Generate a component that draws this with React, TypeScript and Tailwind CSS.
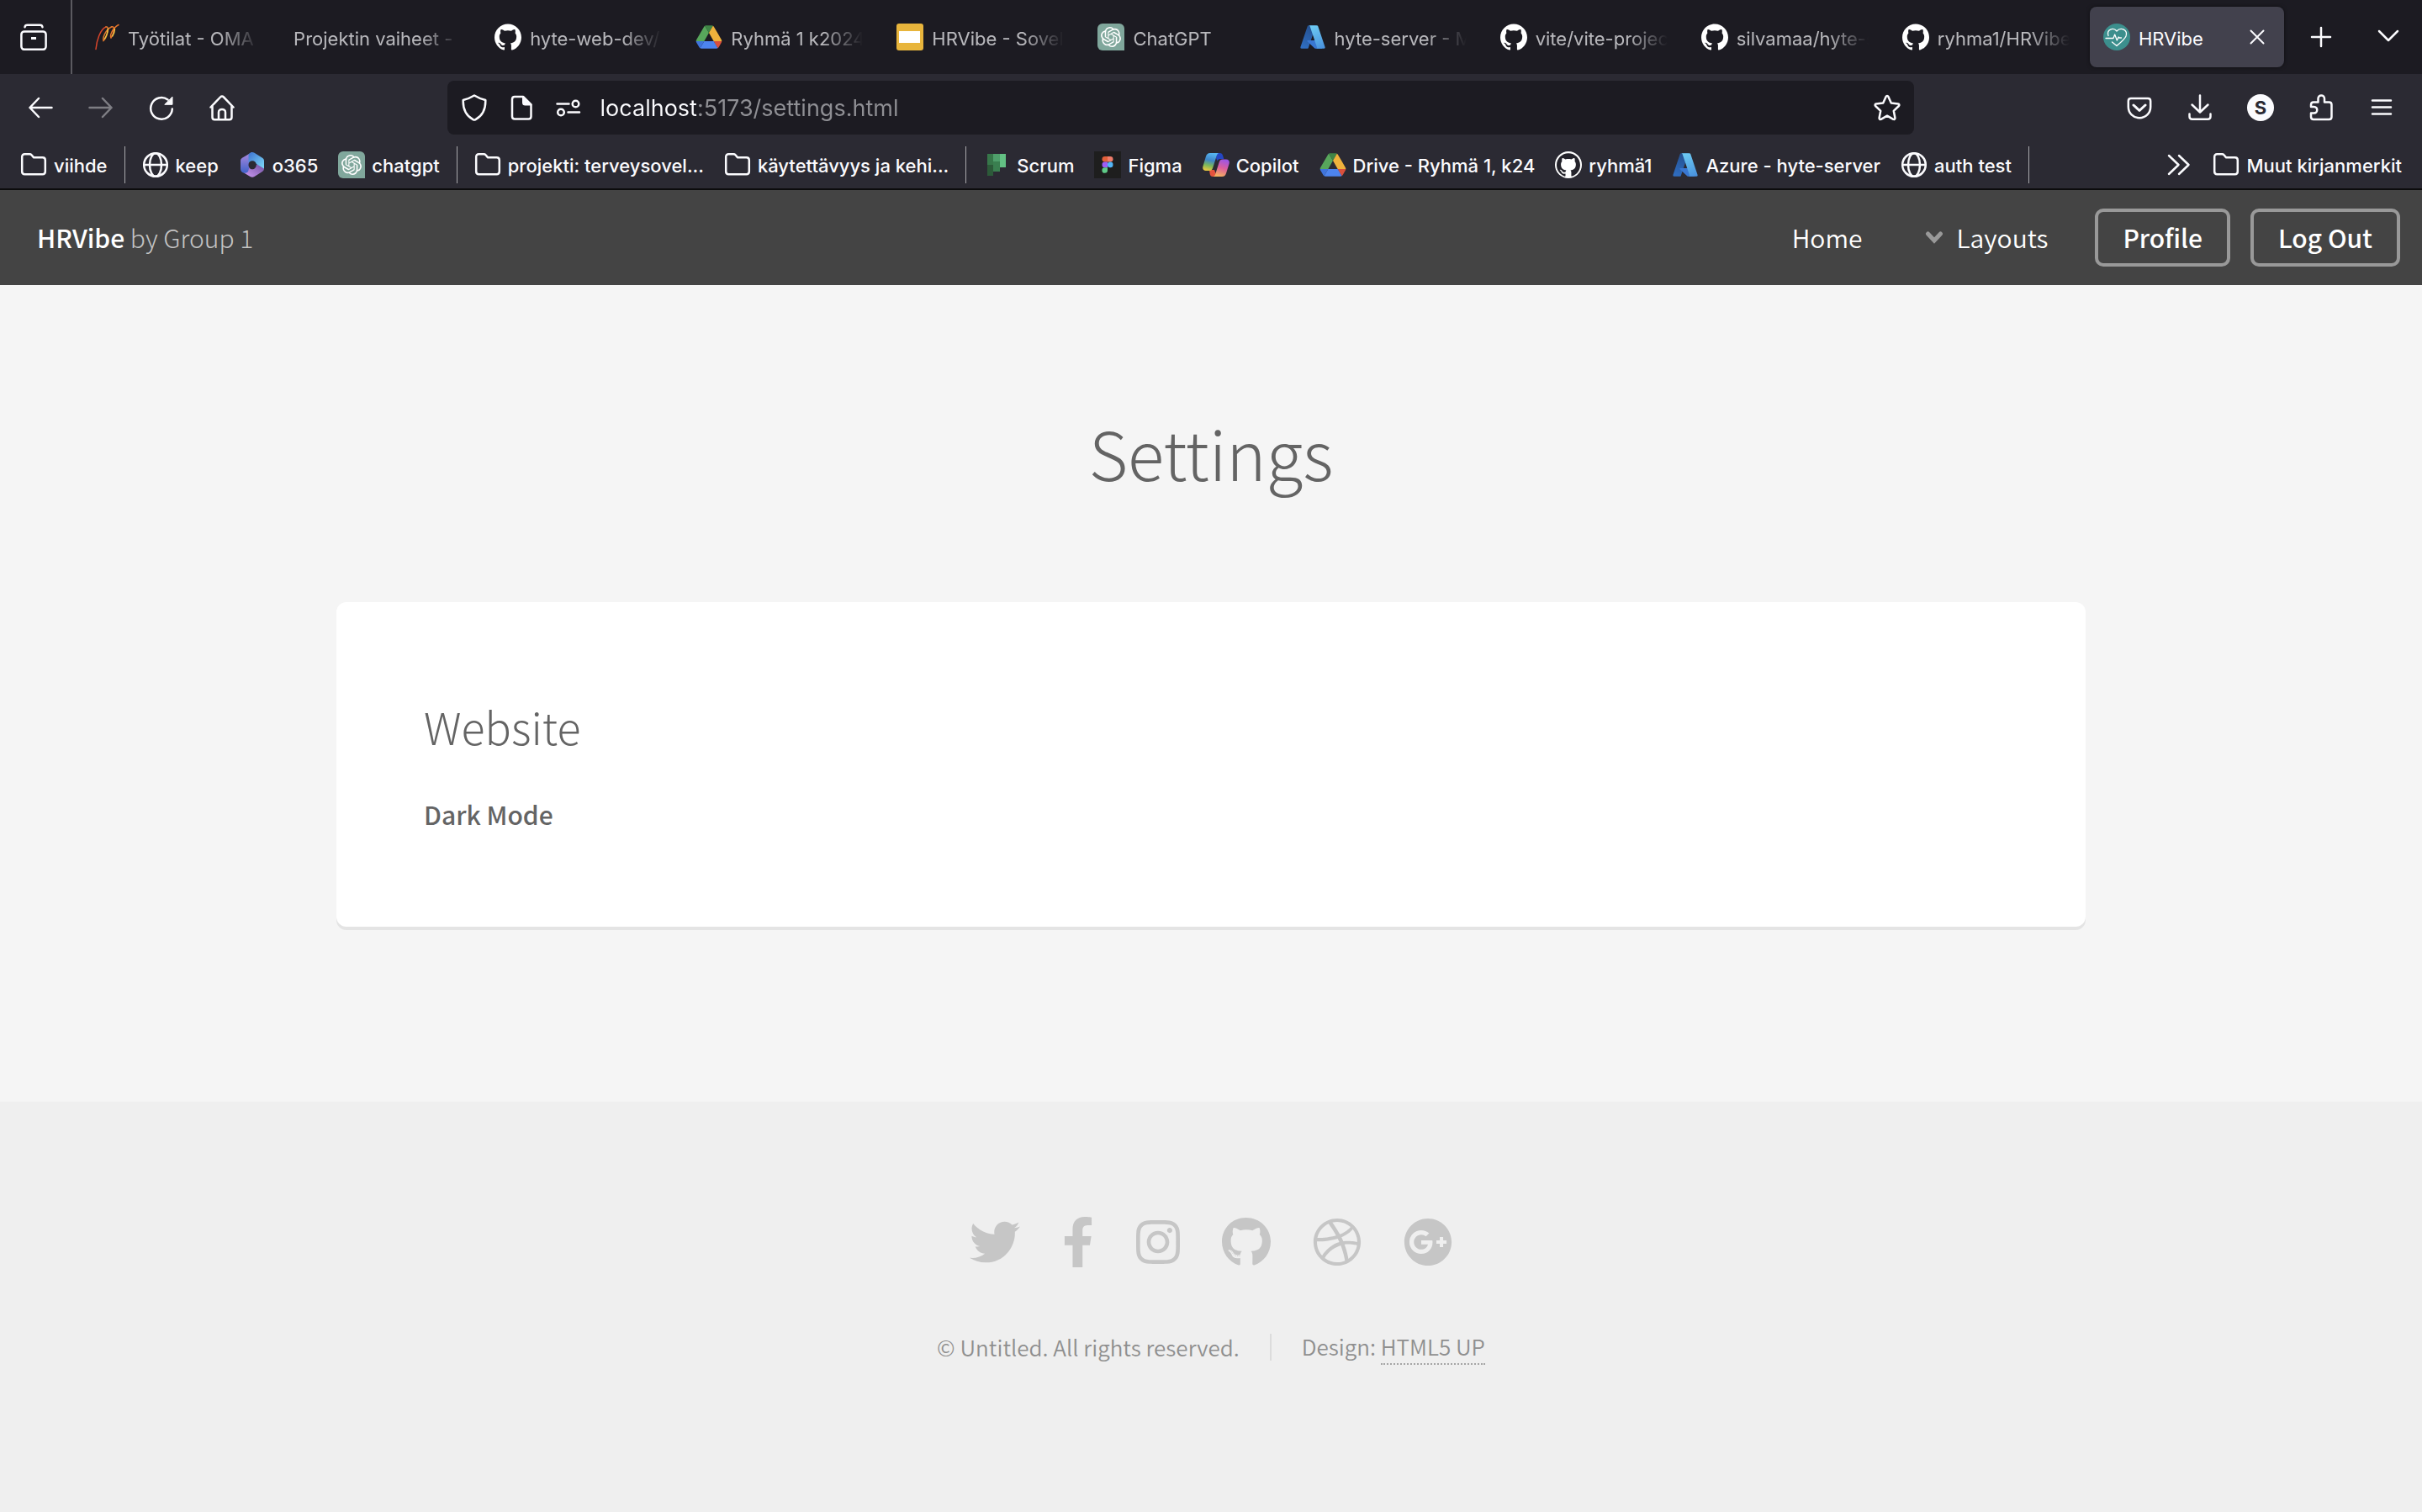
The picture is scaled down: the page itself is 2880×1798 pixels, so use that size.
import type { ReactNode } from "react";
import { SiGithub, SiOpenai } from "react-icons/si";
import {
  FaDribbble,
  FaFacebookF,
  FaGithub,
  FaGooglePlus,
  FaInstagram,
  FaTwitter,
} from "react-icons/fa";

/* ---------- Line icons of the browser chrome ---------- */

function Line({ children, className = "size-8" }: { children: ReactNode; className?: string }) {
  return (
    <svg
      viewBox="0 0 32 32"
      className={className}
      fill="none"
      stroke="currentColor"
      strokeWidth="2.5"
      strokeLinecap="round"
      strokeLinejoin="round"
      aria-hidden="true"
    >
      {children}
    </svg>
  );
}

const ViewIcon = () => (
  <Line>
    <rect x="1.4" y="9.4" width="29.2" height="21.4" rx="3.5" />
    <path d="M5.5 4.2c.3-1.7 1.300-2.400 3-2.400h15c1.700 0 2.700.7 3 2.400" />
    <path d="M13 17.500h6" strokeLinecap="butt" strokeWidth="3" />
  </Line>
);

const BackIcon = () => (
  <Line>
    <path d="M3.500 16h26M14 5 3.500 16 14 27" />
  </Line>
);

const ForwardIcon = () => (
  <Line>
    <path d="M28.500 16h-26M18 5l10.500 11L18 27" />
  </Line>
);

const ReloadIcon = () => (
  <Line>
    <path d="M23.500 6.500A12.800 12.800 0 1 0 28.800 17.500" />
    <path d="M29 3.500v8.800h-8.800z" fill="currentColor" strokeWidth="1" />
  </Line>
);

const HomeIcon = () => (
  <Line>
    <path d="M2.500 15.500 14 3.500c1.200-1.200 2.800-1.200 4 0l11.500 12M4.500 14v13.500c0 1.700 1 2.700 2.700 2.700h17.600c1.700 0 2.700-1 2.700-2.700V14M12 30v-8.500c0-4.700 8-4.700 8 0V30" />
  </Line>
);

const ShieldIcon = () => (
  <Line>
    <path d="M16 1.500c4.500 2.800 8.500 4.300 13.300 5.500.3 10-3.300 18.500-11.800 23.200-1 .5-2 .5-3 0C6 25.500 2.400 17 2.700 7 7.500 5.800 11.500 4.300 16 1.500z" />
  </Line>
);

const PageIcon = () => (
  <Line>
    <path d="M18 3H8C6 3 5 4 5 6v20.500c0 2 1 3 3 3h16.500c2 0 3-1 3-3V12.500z" />
    <path d="M18 3v7c0 1.700.8 2.500 2.500 2.500h7z" fill="currentColor" strokeWidth="2" />
  </Line>
);

const PermissionsIcon = () => (
  <Line>
    <path d="M2.500 11.500h14M15.500 21.500h13.500" />
    <circle cx="24.500" cy="11.500" r="3.800" />
    <circle cx="7" cy="21.500" r="3.800" />
  </Line>
);

const StarIcon = () => (
  <Line>
    <path d="M14.700 2.800c.5-1.100 2.100-1.100 2.600 0l3.500 7.700 8.300 1c1.300.2 1.700 1.600.8 2.500l-6.100 5.900 1.600 8.400c.2 1.300-1 2.200-2.100 1.500L16 25.700l-7.300 4.100c-1.100.7-2.300-.2-2.100-1.500l1.600-8.400L2.100 14c-.9-.9-.5-2.300.8-2.500l8.300-1z" />
  </Line>
);

const PocketIcon = () => (
  <Line>
    <path d="M6 5h20c2 0 3.200 1.200 3.200 3.200V15c0 7.500-5.700 13.200-13.200 13.200S2.800 22.500 2.800 15V8.200C2.800 6.200 4 5 6 5z" />
    <path d="m9 13 7 6.500 7-6.500" strokeWidth="3" />
  </Line>
);

const DownloadIcon = () => (
  <Line>
    <path d="M16 1.500V20M6.500 12.500 16 21.500l9.500-9M3.500 23.500v3c0 2 1.200 3.200 3.200 3.200h18.600c2 0 3.200-1.200 3.200-3.200v-3" />
  </Line>
);

const ExtensionIcon = () => (
  <Line>
    <path d="M12.500 9.500V5.300c0-5.200 7.500-5.200 7.500 0v4.200h5.500c2 0 3 1 3 3V27c0 2-1 3-3 3H7c-2 0-3-1-3-3v-4.500h3.500c5 0 5-7.500 0-7.500H4v-2.500c0-2 1-3 3-3z" />
  </Line>
);

const MenuIcon = () => (
  <Line>
    <path d="M5 7.500h22M5 15.500h22M5 23.500h22" />
  </Line>
);

const CloseIcon = () => (
  <Line className="size-5">
    <path d="M4 4l24 24M28 4 4 28" strokeWidth="3.200" />
  </Line>
);

const PlusIcon = () => (
  <Line>
    <path d="M16 5v22M5 16h22" />
  </Line>
);

const ChevronIcon = () => (
  <Line>
    <path d="m5 9 11 11L27 9" />
  </Line>
);

const OverflowIcon = () => (
  <Line>
    <path d="m4 5 11.500 11L4 27M16 5l11.500 11L16 27" />
  </Line>
);

const FolderIcon = () => (
  <Line>
    <path d="M2.200 6.500c0-2 1.200-3.200 3.200-3.200h5.800c1 0 1.700.3 2.300 1l2 2.300c.4.500.9.700 1.500.7h9.600c2 0 3.200 1.200 3.200 3.200V24c0 2-1.200 3.200-3.200 3.200H5.400c-2 0-3.200-1.200-3.200-3.200z" />
  </Line>
);

const GlobeIcon = () => (
  <Line>
    <circle cx="16" cy="16" r="13.800" />
    <ellipse cx="16" cy="16" rx="7" ry="13.800" />
    <path d="M2.500 16h27" />
  </Line>
);

/* ---------- Site icons ---------- */

const OmaIcon = () => (
  <svg viewBox="0 0 32 32" className="size-8" fill="none" strokeLinecap="round" aria-hidden="true">
    <path d="M4 30.500C5 20 9 7 16 4" stroke="#d8452a" strokeWidth="1.500" />
    <path d="M16 4C21 2.500 17 17 13 20.500c-1-3 2-13 9.500-16.500" stroke="#e07a2b" strokeWidth="1.500" />
    <path d="M22.500 4C28 2.500 24.500 13.500 22 17c-1.500-2.500 1-11 9-15.500" stroke="#e3742b" strokeWidth="1.500" />
    <path d="M18.300 6.500c0 3.500-1.800 8-3.800 11.500M26.500 6.500c0 3-1 6-2.800 8.500" stroke="#f2cf4a" strokeWidth="1.300" />
  </svg>
);

const DriveIcon = () => (
  <svg viewBox="-2 -6 91.300 90" className="size-8" aria-hidden="true">
    <path fill="#3f74dc" d="m6.600 66.850 3.850 6.650c.8 1.400 1.950 2.500 3.300 3.300l13.750-23.800h-27.500c0 1.550.4 3.100 1.200 4.500z" />
    <path fill="#57a65b" d="m43.650 25-13.750-23.800c-1.350.8-2.500 1.900-3.300 3.300l-25.400 44a9.060 9.060 0 0 0 -1.200 4.500h27.500z" />
    <path fill="#d9503c" d="m73.550 76.800c1.350-.8 2.500-1.900 3.300-3.300l1.600-2.750 7.650-13.250c.8-1.400 1.200-2.950 1.200-4.500h-27.502l5.852 11.500z" />
    <path fill="#3f8446" d="m43.650 25 13.750-23.800c-1.350-.8-2.900-1.200-4.500-1.200h-18.500c-1.600 0-3.150.45-4.500 1.200z" />
    <path fill="#4d84ee" d="m59.800 53h-32.300l-13.750 23.800c1.350.8 2.900 1.200 4.500 1.200h50.800c1.600 0 3.150-.45 4.500-1.200z" />
    <path fill="#efb23c" d="m73.400 26.500-12.700-22c-.8-1.400-1.950-2.500-3.300-3.300l-13.750 23.800 16.150 28h27.450c0-1.550-.4-3.100-1.200-4.500z" />
  </svg>
);

const SlidesIcon = () => (
  <svg viewBox="0 0 32 32" className="size-8" aria-hidden="true">
    <rect width="32" height="32" rx="3" fill="#e8b53c" />
    <rect x="3" y="9" width="25" height="14" fill="#fff" />
  </svg>
);

const GptIcon = () => (
  <span className="flex size-8 items-center justify-center rounded-md rounded-br-none bg-[#80a79c]">
    <SiOpenai className="size-6 text-white" />
  </span>
);

const AzureIcon = () => (
  <svg viewBox="0 0 96 96" className="size-8" aria-hidden="true">
    <defs>
      <linearGradient id="azure-left" x1="0.600" y1="0" x2="0.300" y2="1">
        <stop offset="0" stopColor="#24508f" />
        <stop offset="1" stopColor="#2f6dc0" />
      </linearGradient>
      <linearGradient id="azure-right" x1="0.400" y1="0" x2="0.700" y2="1">
        <stop offset="0" stopColor="#6cc9f2" />
        <stop offset="1" stopColor="#4a93de" />
      </linearGradient>
    </defs>
    <path fill="url(#azure-left)" d="M33.338 6.544h26.038l-27.030 80.087a4.152 4.152 0 0 1-3.933 2.824H8.149a4.145 4.145 0 0 1-3.928-5.470L29.404 9.368a4.152 4.152 0 0 1 3.934-2.825z" />
    <path fill="#3977d2" d="M71.175 60.261h-41.290a1.911 1.911 0 0 0-1.305 3.309l26.532 24.764a4.171 4.171 0 0 0 2.846 1.121h23.380z" />
    <path fill="url(#azure-right)" d="M66.595 9.364a4.145 4.145 0 0 0-3.928-2.820H33.648a4.146 4.146 0 0 1 3.928 2.820l25.184 74.620a4.146 4.146 0 0 1-3.928 5.472h29.020a4.146 4.146 0 0 0 3.927-5.472z" />
  </svg>
);

const HeartIcon = () => (
  <svg viewBox="0 0 32 32" className="size-8" fill="none" stroke="#fff" strokeWidth="1.300" strokeLinecap="round" strokeLinejoin="round" aria-hidden="true">
    <circle cx="16" cy="16" r="16" fill="#3c8f8d" stroke="none" />
    <path d="M6 14.500C3.500 7 12 4 16 9c5-5.500 13.500-1.500 11 6-1.700 4-6.500 7.500-11 11.500l-5.500-4.500" />
    <path d="M3 17.500h9l1.700-4.500 2.600 7 1.900-4 .9 1h2.400" />
  </svg>
);

const OfficeIcon = () => (
  <svg viewBox="0 0 32 32" className="size-8" aria-hidden="true">
    <defs>
      <linearGradient id="office-a" x1="0" y1="0" x2="0" y2="1">
        <stop offset="0" stopColor="#b18be0" />
        <stop offset="1" stopColor="#3f62c8" />
      </linearGradient>
      <linearGradient id="office-b" x1="0" y1="0" x2="1" y2="1">
        <stop offset="0" stopColor="#3d72d0" />
        <stop offset="1" stopColor="#7fdcf8" />
      </linearGradient>
      <linearGradient id="office-c" x1="1" y1="0" x2="0" y2="1">
        <stop offset="0" stopColor="#6f4f9f" />
        <stop offset="1" stopColor="#cf9cf5" />
      </linearGradient>
    </defs>
    <path fill="url(#office-c)" d="M30 15v5.500c0 1.500-.7 2.700-2 3.500l-9.500 6c-1.700 1-3.300 1-5 0L6 25.500l5-9z" />
    <path fill="url(#office-a)" d="M15.500 1 4 7.800c-1.300.8-2 2-2 3.500v9.400c0 3 2.500 5 5.500 5 3.500 0 3.800-2.200 4.500-5.200L14 8z" />
    <path fill="url(#office-b)" d="M11.500 13V4.500c0-1.700 2.500-3.500 4.500-3.500.9 0 1.700.2 2.500.7L28 7.800c1.300.8 2 2 2 3.500v9.200l-10-6z" />
    <path fill="#2b2a33" d="M16 11.200c2.600 0 4.800 1.700 4.800 4.800s-2.200 5.300-4.800 5.300-4.500-2.300-4.500-5.300 1.900-4.800 4.500-4.800z" />
  </svg>
);

const PlannerIcon = () => (
  <svg viewBox="0 0 32 32" className="size-8" aria-hidden="true">
    <path fill="#37774a" d="M5 3h7v13H5z" />
    <path fill="#4f9f6b" d="M12 3h8v9h-8z" />
    <path fill="#63c184" d="M20 3h7v16h-7z" />
    <path fill="#3a7f50" d="M12 12h8v12h-8z" />
    <path fill="#2c5a39" d="M5 16h7v13H5z" />
  </svg>
);

const FigmaIcon = () => (
  <svg viewBox="0 0 32 32" className="size-8" aria-hidden="true">
    <path fill="#1e1e1e" d="M0 0h32v32H0z" />
    <path fill="#e2603a" d="M16 6h-3.200a3.300 3.300 0 0 0 0 6.600H16z" />
    <path fill="#ee7d6b" d="M16 6h3.200a3.300 3.300 0 0 1 0 6.600H16z" />
    <path fill="#9d5cf5" d="M16 12.600h-3.200a3.300 3.300 0 0 0 0 6.600H16z" />
    <circle cx="19.200" cy="15.900" r="3.300" fill="#53b6f8" />
    <path fill="#5fcb88" d="M16 19.200h-3.200a3.300 3.300 0 1 0 3.200 3.300z" />
  </svg>
);

const CopilotIcon = () => (
  <svg viewBox="0 0 32 32" className="size-8" aria-hidden="true">
    <defs>
      <linearGradient id="copilot-a" x1="0.500" y1="0" x2="0.300" y2="1">
        <stop offset="0" stopColor="#56b4f0" />
        <stop offset="0.400" stopColor="#3f86c8" />
        <stop offset="0.700" stopColor="#7cb85a" />
        <stop offset="1" stopColor="#ecc940" />
      </linearGradient>
      <linearGradient id="copilot-b" x1="0.700" y1="0" x2="0.400" y2="1">
        <stop offset="0" stopColor="#9a55e8" />
        <stop offset="0.500" stopColor="#dc5f9c" />
        <stop offset="1" stopColor="#f5b25e" />
      </linearGradient>
    </defs>
    <path fill="#2446c4" d="M17 2h3.500c2 0 3 1 3.600 3l1.200 4H21c-2 0-3 1-3.500 2.500L16 8z" />
    <path fill="#e5533d" d="M8 22h6l2 5-2 3h-2c-2 0-2.800-1-3.300-3z" />
    <path fill="url(#copilot-a)" d="M9 2h10c-1.300.7-1.900 2-2.400 3.500l-4.400 14C11.500 22 10.300 23 8 23H4c-3 0-4.500-2-3.500-5.500l3.300-11C4.700 3.500 6 2 9 2z" />
    <path fill="url(#copilot-b)" d="M24 9.500h4c3 0 4.500 2 3.500 5.500l-3.300 10.500c-.9 3-2.200 4.500-5.200 4.500H12.500c1.500-.5 2.200-1.500 2.700-3l4.500-14c.7-2.500 2-3.500 4.300-3.500z" />
  </svg>
);

const GithubTabIcon = () => <SiGithub className="size-8 text-white" />;

const GithubBadgeIcon = () => (
  <span className="flex size-8 items-center justify-center rounded-full bg-white">
    <SiGithub className="size-7 text-[#24232b]" />
  </span>
);

/* ---------- Data ---------- */

type Entry = { label: string; icon?: ReactNode };

const tabs: Entry[] = [
  { label: "Työtilat - OMA", icon: <OmaIcon /> },
  { label: "Projektin vaiheet -" },
  { label: "hyte-web-dev/", icon: <GithubTabIcon /> },
  { label: "Ryhmä 1 k2024", icon: <DriveIcon /> },
  { label: "HRVibe - Sovel", icon: <SlidesIcon /> },
  { label: "ChatGPT", icon: <GptIcon /> },
  { label: "hyte-server - M", icon: <AzureIcon /> },
  { label: "vite/vite-projec", icon: <GithubTabIcon /> },
  { label: "silvamaa/hyte-s", icon: <GithubTabIcon /> },
  { label: "ryhma1/HRVibe", icon: <GithubTabIcon /> },
];

const bookmarkGroups: Entry[][] = [
  [{ label: "viihde", icon: <FolderIcon /> }],
  [
    { label: "keep", icon: <GlobeIcon /> },
    { label: "o365", icon: <OfficeIcon /> },
    { label: "chatgpt", icon: <GptIcon /> },
  ],
  [
    { label: "projekti: terveysovel...", icon: <FolderIcon /> },
    { label: "käytettävyys ja kehi...", icon: <FolderIcon /> },
  ],
  [
    { label: "Scrum", icon: <PlannerIcon /> },
    { label: "Figma", icon: <FigmaIcon /> },
    { label: "Copilot", icon: <CopilotIcon /> },
    { label: "Drive - Ryhmä 1, k24", icon: <DriveIcon /> },
    { label: "ryhmä1", icon: <GithubBadgeIcon /> },
    { label: "Azure - hyte-server", icon: <AzureIcon /> },
    { label: "auth test", icon: <GlobeIcon /> },
  ],
];

/* ---------- Browser chrome ---------- */

function ToolButton({ label, children, dim }: { label: string; children: ReactNode; dim?: boolean }) {
  return (
    <button
      type="button"
      aria-label={label}
      disabled={dim}
      className="flex h-16 w-[72px] items-center justify-center disabled:opacity-40"
    >
      {children}
    </button>
  );
}

function FieldButton({ label, children }: { label: string; children: ReactNode }) {
  return (
    <button type="button" aria-label={label} className="flex h-16 w-14 shrink-0 items-center justify-center">
      {children}
    </button>
  );
}

function TabStrip() {
  return (
    <div className="flex h-[88px] bg-[#1c1b22]">
      <button
        type="button"
        aria-label="Firefox View"
        className="flex w-[86px] shrink-0 items-center justify-center border-r-2 border-[#5b5a60] pr-1"
      >
        <ViewIcon />
      </button>
      <div role="tablist" className="grid min-w-0 flex-1 grid-cols-[repeat(11,minmax(0,1fr))] items-center pl-1">
        {tabs.map((tab) => (
          <button
            key={tab.label}
            type="button"
            role="tab"
            aria-selected="false"
            className="flex h-[72px] items-center gap-2.5 px-5 text-[#fbfbfe]"
          >
            {tab.icon && <span className="shrink-0">{tab.icon}</span>}
            <span className="min-w-0 flex-1 overflow-hidden pt-1 text-left text-[22px] leading-8 whitespace-nowrap opacity-70 [mask-image:linear-gradient(to_left,transparent,black_48px)]">
              {tab.label}
            </span>
          </button>
        ))}
        <div className="px-1">
          <div className="flex h-[72px] items-center rounded-lg bg-[#42414d] shadow-[0_0_4px_rgba(0,0,0,0.5)]">
            <button
              type="button"
              role="tab"
              aria-selected="true"
              className="flex h-full min-w-0 flex-1 items-center gap-2.5 pl-4 text-[22px] leading-8 text-[#fbfbfe]"
            >
              <HeartIcon />
              <span className="pt-1">HRVibe</span>
            </button>
            <button type="button" aria-label="Close tab" className="flex size-16 items-center justify-center text-[#fbfbfe]">
              <CloseIcon />
            </button>
          </div>
        </div>
      </div>
      <button type="button" aria-label="New tab" className="flex w-20 items-center justify-center">
        <PlusIcon />
      </button>
      <button type="button" aria-label="List all tabs" className="flex w-20 items-center justify-center">
        <ChevronIcon />
      </button>
    </div>
  );
}

function Toolbar() {
  return (
    <div className="flex items-center px-3 py-2">
      <ToolButton label="Back"><BackIcon /></ToolButton>
      <ToolButton label="Forward" dim><ForwardIcon /></ToolButton>
      <ToolButton label="Reload"><ReloadIcon /></ToolButton>
      <ToolButton label="Home"><HomeIcon /></ToolButton>
      <div className="grow-[2] basis-0" />
      <div className="flex h-16 grow-[15] basis-0 items-center rounded-lg bg-[#1c1b22] px-1">
        <FieldButton label="Tracking protection"><ShieldIcon /></FieldButton>
        <FieldButton label="Site information"><PageIcon /></FieldButton>
        <FieldButton label="Permissions"><PermissionsIcon /></FieldButton>
        <input
          type="text"
          aria-label="Address"
          defaultValue="localhost:5173/settings.html"
          className="mx-2.5 min-w-0 flex-1 bg-[linear-gradient(to_right,#fbfbfe_115px,#8f8f94_115px)] bg-clip-text pt-0.5 text-[27px] leading-10 text-transparent outline-none"
        />
        <FieldButton label="Bookmark this page"><StarIcon /></FieldButton>
      </div>
      <div className="grow-[2] basis-0" />
      <ToolButton label="Save to Pocket"><PocketIcon /></ToolButton>
      <ToolButton label="Downloads"><DownloadIcon /></ToolButton>
      <ToolButton label="Account">
        <span className="flex size-8 items-center justify-center rounded-full bg-[#fbfbfe] text-[22px] leading-8 font-bold text-[#2b2a33]">
          S
        </span>
      </ToolButton>
      <ToolButton label="Extensions"><ExtensionIcon /></ToolButton>
      <ToolButton label="Menu"><MenuIcon /></ToolButton>
    </div>
  );
}

function Bookmark({ label, icon }: Entry) {
  return (
    <a href="#" className="flex items-center gap-2 px-3 text-[22px] leading-8 font-medium whitespace-nowrap">
      {icon}
      <span className="pt-0.5">{label}</span>
    </a>
  );
}

function Bookmarks() {
  return (
    <nav aria-label="Bookmarks" className="flex h-14 items-center justify-between px-3">
      <div className="flex items-center">
        {bookmarkGroups.map((group, i) => (
          <div key={i} className="flex items-center">
            {group.map((item) => (
              <Bookmark key={item.label} {...item} />
            ))}
            <span className="mx-2 h-11 w-px bg-[#a9a9ad]" />
          </div>
        ))}
      </div>
      <div className="flex items-center">
        <button type="button" aria-label="More bookmarks" className="px-3">
          <OverflowIcon />
        </button>
        <Bookmark label="Muut kirjanmerkit" icon={<FolderIcon />} />
      </div>
    </nav>
  );
}

/* ---------- Page ---------- */

function SiteHeader() {
  return (
    <header className="flex h-[113px] items-center justify-between bg-[#444] pr-[26px] pl-11 text-[30px] leading-10 text-white">
      <a href="#" className="pb-0.5 font-light text-white/70">
        <span className="font-medium text-white">HRVibe</span> by Group 1
      </a>
      <nav className="flex items-center">
        <a href="#" className="mr-[74px] pb-0.5 font-[350]">Home</a>
        <button type="button" className="mr-14 flex items-center gap-4 pb-0.5 font-[350]">
          <svg viewBox="0 0 22 16" className="h-4 w-[22px]" fill="none" stroke="#999" strokeWidth="5" strokeLinecap="round" aria-hidden="true">
            <path d="m3.500 4 7.500 8 7.500-8" />
          </svg>
          Layouts
        </button>
        <button type="button" className="mr-6 h-[69px] rounded-[10px] border-4 border-[#999] px-[29px] pb-0.5 font-medium">Profile</button>
        <button type="button" className="h-[69px] rounded-[10px] border-4 border-[#999] px-[29px] pb-0.5 font-medium">Log Out</button>
      </nav>
    </header>
  );
}

const social = [
  { label: "Twitter", Icon: FaTwitter, size: "h-[60px] w-[60px]" },
  { label: "Facebook", Icon: FaFacebookF, size: "h-[60px] w-[38px]" },
  { label: "Instagram", Icon: FaInstagram, size: "h-[60px] w-[52px]" },
  { label: "Github", Icon: FaGithub, size: "h-[60px] w-[58px]" },
  { label: "Dribbble", Icon: FaDribbble, size: "h-[60px] w-[58px]" },
  { label: "Google+", Icon: FaGooglePlus, size: "h-[60px] w-[58px]" },
];

function SiteFooter() {
  return (
    <footer className="flex flex-1 flex-col items-center bg-[#efefef] pt-[137px] pb-24">
      <ul className="flex gap-[50px] text-[#c6c6c6]">
        {social.map(({ label, Icon, size }) => (
          <li key={label}>
            <a href="#" aria-label={label} className="block">
              <Icon className={size} />
            </a>
          </li>
        ))}
      </ul>
      <ul className="mt-[74px] flex items-center text-[26px] leading-10 font-[350] text-[#8f8f8f]">
        <li>© Untitled. All rights reserved.</li>
        <li className="mx-9 h-8 w-0.5 bg-[#dcdcdc]" aria-hidden="true" />
        <li>
          Design:{" "}
          <a href="#" className="inline-block border-b-2 border-dotted border-[#a5a5a5]">HTML5 UP</a>
        </li>
      </ul>
    </footer>
  );
}

export default function App() {
  return (
    <div className="flex min-h-screen flex-col bg-[#f5f5f5] font-['Noto_Sans_CJK_SC',sans-serif]">
      <div className="border-b-2 border-[#0c0c0d] bg-[#2b2a33] font-['Inter',sans-serif] text-[#fbfbfe]">
        <TabStrip />
        <Toolbar />
        <Bookmarks />
      </div>
      <SiteHeader />
      <main className="mx-auto w-[72.222%] pt-[138px] pb-[208px] text-[#646464]">
        <h1 className="text-center text-[80px] leading-[120px] font-light">Settings</h1>
        <section className="mt-[119px] rounded-xl bg-white px-[104px] pt-[110px] pb-[109px] shadow-[0_4px_0_#e4e4e4]">
          <h2 className="text-[52px] leading-[76px] font-light">Website</h2>
          <h3 className="mt-[41px] text-[30px] leading-[50px] font-medium">Dark Mode</h3>
        </section>
      </main>
      <SiteFooter />
    </div>
  );
}
